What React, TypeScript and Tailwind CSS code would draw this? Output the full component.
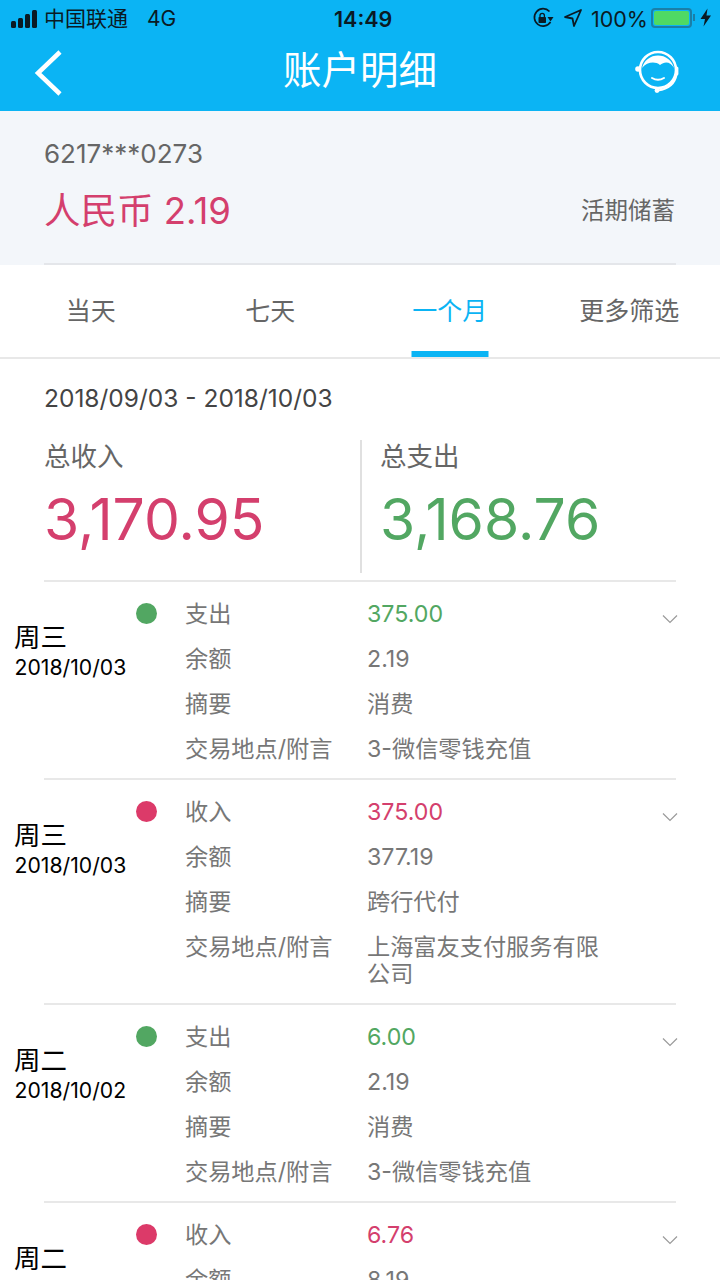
const font = { fontFamily: '"Inter","Noto Sans CJK SC",sans-serif' };

type Row = {
  day: string;
  date: string;
  kind: "支出" | "收入";
  amount: string;
  balance: string;
  note: string;
  place: string;
};

const rows: Row[] = [
  { day: "周三", date: "2018/10/03", kind: "支出", amount: "375.00", balance: "2.19", note: "消费", place: "3-微信零钱充值" },
  { day: "周三", date: "2018/10/03", kind: "收入", amount: "375.00", balance: "377.19", note: "跨行代付", place: "上海富友支付服务有限公司" },
  { day: "周二", date: "2018/10/02", kind: "支出", amount: "6.00", balance: "2.19", note: "消费", place: "3-微信零钱充值" },
  { day: "周二", date: "2018/10/02", kind: "收入", amount: "6.76", balance: "8.19", note: "跨行代付", place: "上海富友支付服务有限公司" },
];

function Line({ label, value, color }: { label: string; value: string; color?: string }) {
  return (
    <div className="flex mb-[18px] last:mb-[15px]">
      <div className="w-[182px] shrink-0 text-[23.2px] leading-[27px] text-[#777777]">{label}</div>
      <div className={`w-[240px] text-[23.2px] leading-[27px] ${color ?? "text-[#777777]"}`}>{value}</div>
    </div>
  );
}

function Record({ row }: { row: Row }) {
  const out = row.kind === "支出";
  return (
    <div className="relative">
      <div className="mx-[44px] h-[2px] bg-[#e8e8e8]" />
      <div className="flex pt-[19px]">
        <div className="w-[136px] shrink-0 pl-[15px] pt-[21px] text-black">
          <div className="text-[26.5px] leading-[31px] -ml-[1px]">{row.day}</div>
          <div className="text-[21.2px] leading-[28px] whitespace-nowrap -ml-[0.5px]">{row.date}</div>
        </div>
        <div className={`w-[21px] h-[21px] mt-[2px] rounded-full shrink-0 ${out ? "bg-[#52a762]" : "bg-[#dc3a69]"}`} />
        <div className="ml-[28px]">
          <Line label={row.kind} value={row.amount} color={out ? "text-[#52a762]" : "text-[#d43f6d]"} />
          <Line label="余额" value={row.balance} />
          <Line label="摘要" value={row.note} />
          <Line label="交易地点/附言" value={row.place} />
        </div>
      </div>
      <svg className="absolute left-[662px] top-[34px]" width="16" height="10" viewBox="0 0 16 10" fill="none">
        <path d="M1 1.5 L8 8.5 L15 1.5" stroke="#9a9a9a" strokeWidth="1.2" />
      </svg>
    </div>
  );
}

function Tab({ label, active }: { label: string; active?: boolean }) {
  return (
    <div className="relative flex-1 flex items-center justify-center">
      <span className={`text-[25px] mt-[2px] ${active ? "text-[#0bb4f4]" : "text-[#666666]"}`}>{label}</span>
      {active && <div className="absolute bottom-0 left-1/2 -translate-x-1/2 w-[77px] h-[6px] bg-[#0bb4f4]" />}
    </div>
  );
}

export default function App() {
  return (
    <div style={font} className="w-[720px] h-[1280px] overflow-hidden bg-white">
      <div className="bg-[#0bb4f4] h-[111px] relative">
        <div className="h-[38px] relative flex items-center text-[#0a1a24]">
          <svg className="ml-[10px]" width="29" height="18" viewBox="0 0 29 18" fill="#0a1a24">
            <rect x="1" y="11" width="5" height="7" rx="1.5" />
            <rect x="8" y="8" width="5" height="10" rx="1.5" />
            <rect x="15" y="4" width="5" height="14" rx="1.5" />
            <rect x="22" y="0" width="5" height="18" rx="1.5" />
          </svg>
          <span className="ml-[5px] text-[21px] whitespace-nowrap">中国联通</span>
          <span className="ml-[19px] text-[21px]">4G</span>
          <span className="absolute left-[334px] text-[21.5px] font-semibold">14:49</span>
          <svg className="absolute left-[532px] top-[7px]" width="22" height="22" viewBox="0 0 22 22" fill="none" stroke="#0a1a24" strokeWidth="1.7">
            <path d="M17.5 4.5 A8.7 8.7 0 1 0 18.5 15" />
            <path d="M15.5 10 L21.5 10 L18.5 14.5 Z" fill="#0a1a24" stroke="none" />
            <rect x="6.5" y="10" width="7.5" height="6" rx="0.8" fill="#0a1a24" stroke="none" />
            <path d="M8 10 V8.5 a2.2 2.2 0 0 1 4.4 0 V10" strokeWidth="1.3" />
          </svg>
          <svg className="absolute left-[564px] top-[9px]" width="18" height="18" viewBox="0 0 18 18" fill="none" stroke="#0a1a24" strokeWidth="1.8" strokeLinejoin="round">
            <path d="M1 8 L17 1 L10 17 L8.5 9.5 Z" />
          </svg>
          <span className="absolute left-[591px] text-[21.5px]">100%</span>
          <div className="absolute left-[651px] top-[8px] w-[41px] h-[20px] rounded-[4px] border-[2px] border-[#1a7fa8] p-[1px]">
            <div className="w-full h-full bg-[#4fd964] rounded-[2px]" />
          </div>
          <div className="absolute left-[693px] top-[14px] w-[2px] h-[7px] bg-[#1a7fa8]" />
          <svg className="absolute left-[700px] top-[8px]" width="12" height="19" viewBox="0 0 12 18" fill="#0a1a24">
            <path d="M7.5 0 L0.5 10.5 H5 L3.5 18 L11 7 H6.5 Z" />
          </svg>
        </div>
        <svg className="absolute left-[34px] top-[50px]" width="28" height="46" viewBox="0 0 28 46" fill="none" stroke="white" strokeWidth="4.5">
          <path d="M26 2 L4 23 L26 44" />
        </svg>
        <div className="absolute left-0 right-0 top-[43px] text-center text-white text-[38.5px] leading-[54px]">账户明细</div>
        <svg className="absolute left-[634px] top-[48px]" width="48" height="48" viewBox="0 0 48 48" fill="none" stroke="white">
          <circle cx="24" cy="22" r="18" strokeWidth="2.6" />
          <path d="M8 20 A16.5 16.5 0 0 1 40 20 C37 14 31 12.5 26 17 C21 13 13 14 8 20 Z" fill="white" stroke="none" />
          <path d="M18 30 Q24 33.5 30 30" strokeWidth="2" strokeLinecap="round" />
          <circle cx="4" cy="21" r="2.8" fill="white" stroke="none" />
          <path d="M42.8 20 V26" strokeWidth="3.2" strokeLinecap="round" />
          <path d="M42.5 27 Q40 40 24 42.5" strokeWidth="2" />
          <circle cx="23" cy="42.5" r="2.4" fill="white" stroke="none" />
        </svg>
      </div>

      <div className="bg-[#f3f6fa] h-[154px] px-[44px] pt-[27px] relative">
        <div className="text-[26px] leading-[32px] text-[#666666]">6217***0273</div>
        <div className="flex items-center justify-between mt-[16px]">
          <span className="text-[36.5px] leading-[50px] text-[#d43f6d]">人民币 2.19</span>
          <span className="text-[23.5px] text-[#666666] mr-[1px]">活期储蓄</span>
        </div>
        <div className="absolute left-[44px] right-[44px] bottom-0 h-[2px] bg-[#e4e6ea]" />
      </div>

      <div className="h-[94px] flex border-b-[2px] border-[#e8e8e8] px-[1px]">
        <Tab label="当天" />
        <Tab label="七天" />
        <Tab label="一个月" active />
        <Tab label="更多筛选" />
      </div>

      <div className="px-[44px] pt-[23px] text-[24.5px] leading-[32px] text-[#444444]">2018/09/03 - 2018/10/03</div>

      <div className="flex mx-[44px] mt-[26px] h-[133px] mb-[7px]">
        <div className="w-[318px] border-r-[2px] border-[#e0e0e0]">
          <div className="text-[26.5px] leading-[32px] text-[#666666]">总收入</div>
          <div className="text-[57px] leading-[68px] mt-[14px] text-[#d43f6d]">3,170.95</div>
        </div>
        <div className="pl-[18px]">
          <div className="text-[26.5px] leading-[32px] text-[#666666]">总支出</div>
          <div className="text-[57px] leading-[68px] mt-[14px] text-[#52a762]">3,168.76</div>
        </div>
      </div>

      {rows.map((r, i) => (
        <Record key={i} row={r} />
      ))}
    </div>
  );
}
